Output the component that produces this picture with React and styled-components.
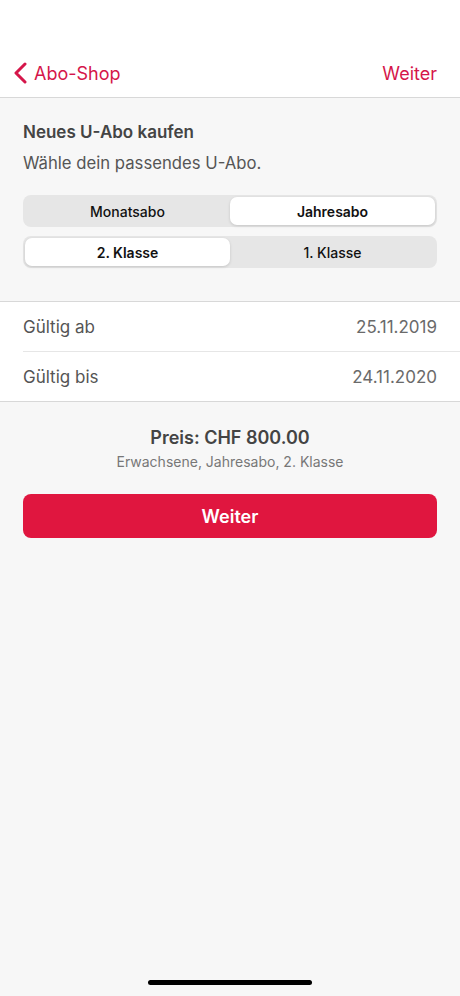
import React, { useState } from 'react';
import styled, { createGlobalStyle } from 'styled-components';

const GlobalStyle = createGlobalStyle`
  html, body {
    margin: 0;
    padding: 0;
    background: #f7f7f7;
  }
  body {
    font-family: Inter, "Open Sans", "Liberation Sans", sans-serif;
    -webkit-font-smoothing: antialiased;
  }
`;

const Screen = styled.div`
  width: 460px;
  height: 996px;
  background: #f7f7f7;
  display: flex;
  flex-direction: column;
  position: relative;
  overflow: hidden;
`;

const NavBar = styled.div`
  height: 98px;
  box-sizing: border-box;
  background: #fff;
  border-bottom: 1px solid #d8d8d8;
  display: flex;
  align-items: flex-end;
  justify-content: space-between;
  padding: 0 23px 13px 13px;
`;

const NavButton = styled.button`
  background: none;
  border: none;
  padding: 0;
  display: flex;
  align-items: center;
  gap: 6px;
  color: #d5164a;
  font-family: inherit;
  font-size: 18px;
  cursor: pointer;

  svg {
    width: 15px;
    height: 22px;
  }
`;

const Intro = styled.div`
  padding: 20px 23px 0;
`;

const Title = styled.h1`
  margin: 0;
  font-size: 17px;
  font-weight: 600;
  color: #444;
  line-height: 28px;
`;

const Lead = styled.p`
  margin: 3px 0 0;
  font-size: 16.7px;
  color: #555;
  line-height: 28px;
`;

const Segments = styled.div`
  margin-top: ${(p) => p.$top}px;
  height: 32px;
  background: #e6e6e6;
  border-radius: 8px;
  display: grid;
  grid-template-columns: 1fr 1fr;
  padding: 2px;
  box-sizing: border-box;
`;

const Segment = styled.button`
  border: none;
  border-radius: 7px;
  font-family: inherit;
  font-size: 14px;
  font-weight: ${(p) => (p.$active ? 600 : 500)};
  color: #111;
  background: ${(p) => (p.$active ? '#fff' : 'transparent')};
  box-shadow: ${(p) => (p.$active ? '0 1px 3px rgba(0,0,0,0.15)' : 'none')};
  cursor: pointer;
`;

const DateList = styled.div`
  margin-top: 33px;
  background: #fff;
  border-top: 1px solid #d8d8d8;
  border-bottom: 1px solid #d8d8d8;
`;

const DateRow = styled.div`
  margin-left: 23px;
  padding-right: 23px;
  height: ${(p) => (p.$last ? 49 : 50)}px;
  display: flex;
  align-items: center;
  justify-content: space-between;
  font-size: 17px;
  color: #555;
  border-bottom: ${(p) => (p.$last ? 'none' : '1px solid #e6e6e6')};
  box-sizing: border-box;

  span:last-child {
    color: #6a6a6a;
  }
`;

const Summary = styled.div`
  display: flex;
  flex-direction: column;
  align-items: center;
  padding-top: 23px;
`;

const Price = styled.div`
  font-size: 18px;
  font-weight: 600;
  color: #444;
  line-height: 26px;
`;

const Details = styled.div`
  font-size: 14px;
  color: #777;
  line-height: 20px;
  margin-top: 1px;
`;

const PrimaryButton = styled.button`
  margin: 22px 23px 0;
  height: 44px;
  border: none;
  border-radius: 8px;
  background: #e0163f;
  color: #fff;
  font-family: inherit;
  font-size: 18px;
  font-weight: 600;
  cursor: pointer;
`;

const HomeIndicator = styled.div`
  position: absolute;
  left: 148px;
  bottom: 11px;
  width: 164px;
  height: 5px;
  border-radius: 3px;
  background: #000;
`;

const Chevron = () => (
  <svg viewBox="0 0 15 22" fill="none">
    <path d="M12 2 L3 11 L12 20" stroke="currentColor" strokeWidth="3" strokeLinecap="round" strokeLinejoin="round" />
  </svg>
);

export default function App() {
  const [period, setPeriod] = useState('year');
  const [klass, setKlass] = useState(2);

  return (
    <>
      <GlobalStyle />
      <Screen>
        <NavBar>
          <NavButton>
            <Chevron />
            Abo-Shop
          </NavButton>
          <NavButton>Weiter</NavButton>
        </NavBar>

        <Intro>
          <Title>Neues U-Abo kaufen</Title>
          <Lead>Wähle dein passendes U-Abo.</Lead>
          <Segments $top={18}>
            <Segment $active={period === 'month'} onClick={() => setPeriod('month')}>Monatsabo</Segment>
            <Segment $active={period === 'year'} onClick={() => setPeriod('year')}>Jahresabo</Segment>
          </Segments>
          <Segments $top={9}>
            <Segment $active={klass === 2} onClick={() => setKlass(2)}>2. Klasse</Segment>
            <Segment $active={klass === 1} onClick={() => setKlass(1)}>1. Klasse</Segment>
          </Segments>
        </Intro>

        <DateList>
          <DateRow>
            <span>Gültig ab</span>
            <span>25.11.2019</span>
          </DateRow>
          <DateRow $last>
            <span>Gültig bis</span>
            <span>24.11.2020</span>
          </DateRow>
        </DateList>

        <Summary>
          <Price>Preis: CHF 800.00</Price>
          <Details>Erwachsene, Jahresabo, 2. Klasse</Details>
        </Summary>

        <PrimaryButton>Weiter</PrimaryButton>

        <HomeIndicator />
      </Screen>
    </>
  );
}
